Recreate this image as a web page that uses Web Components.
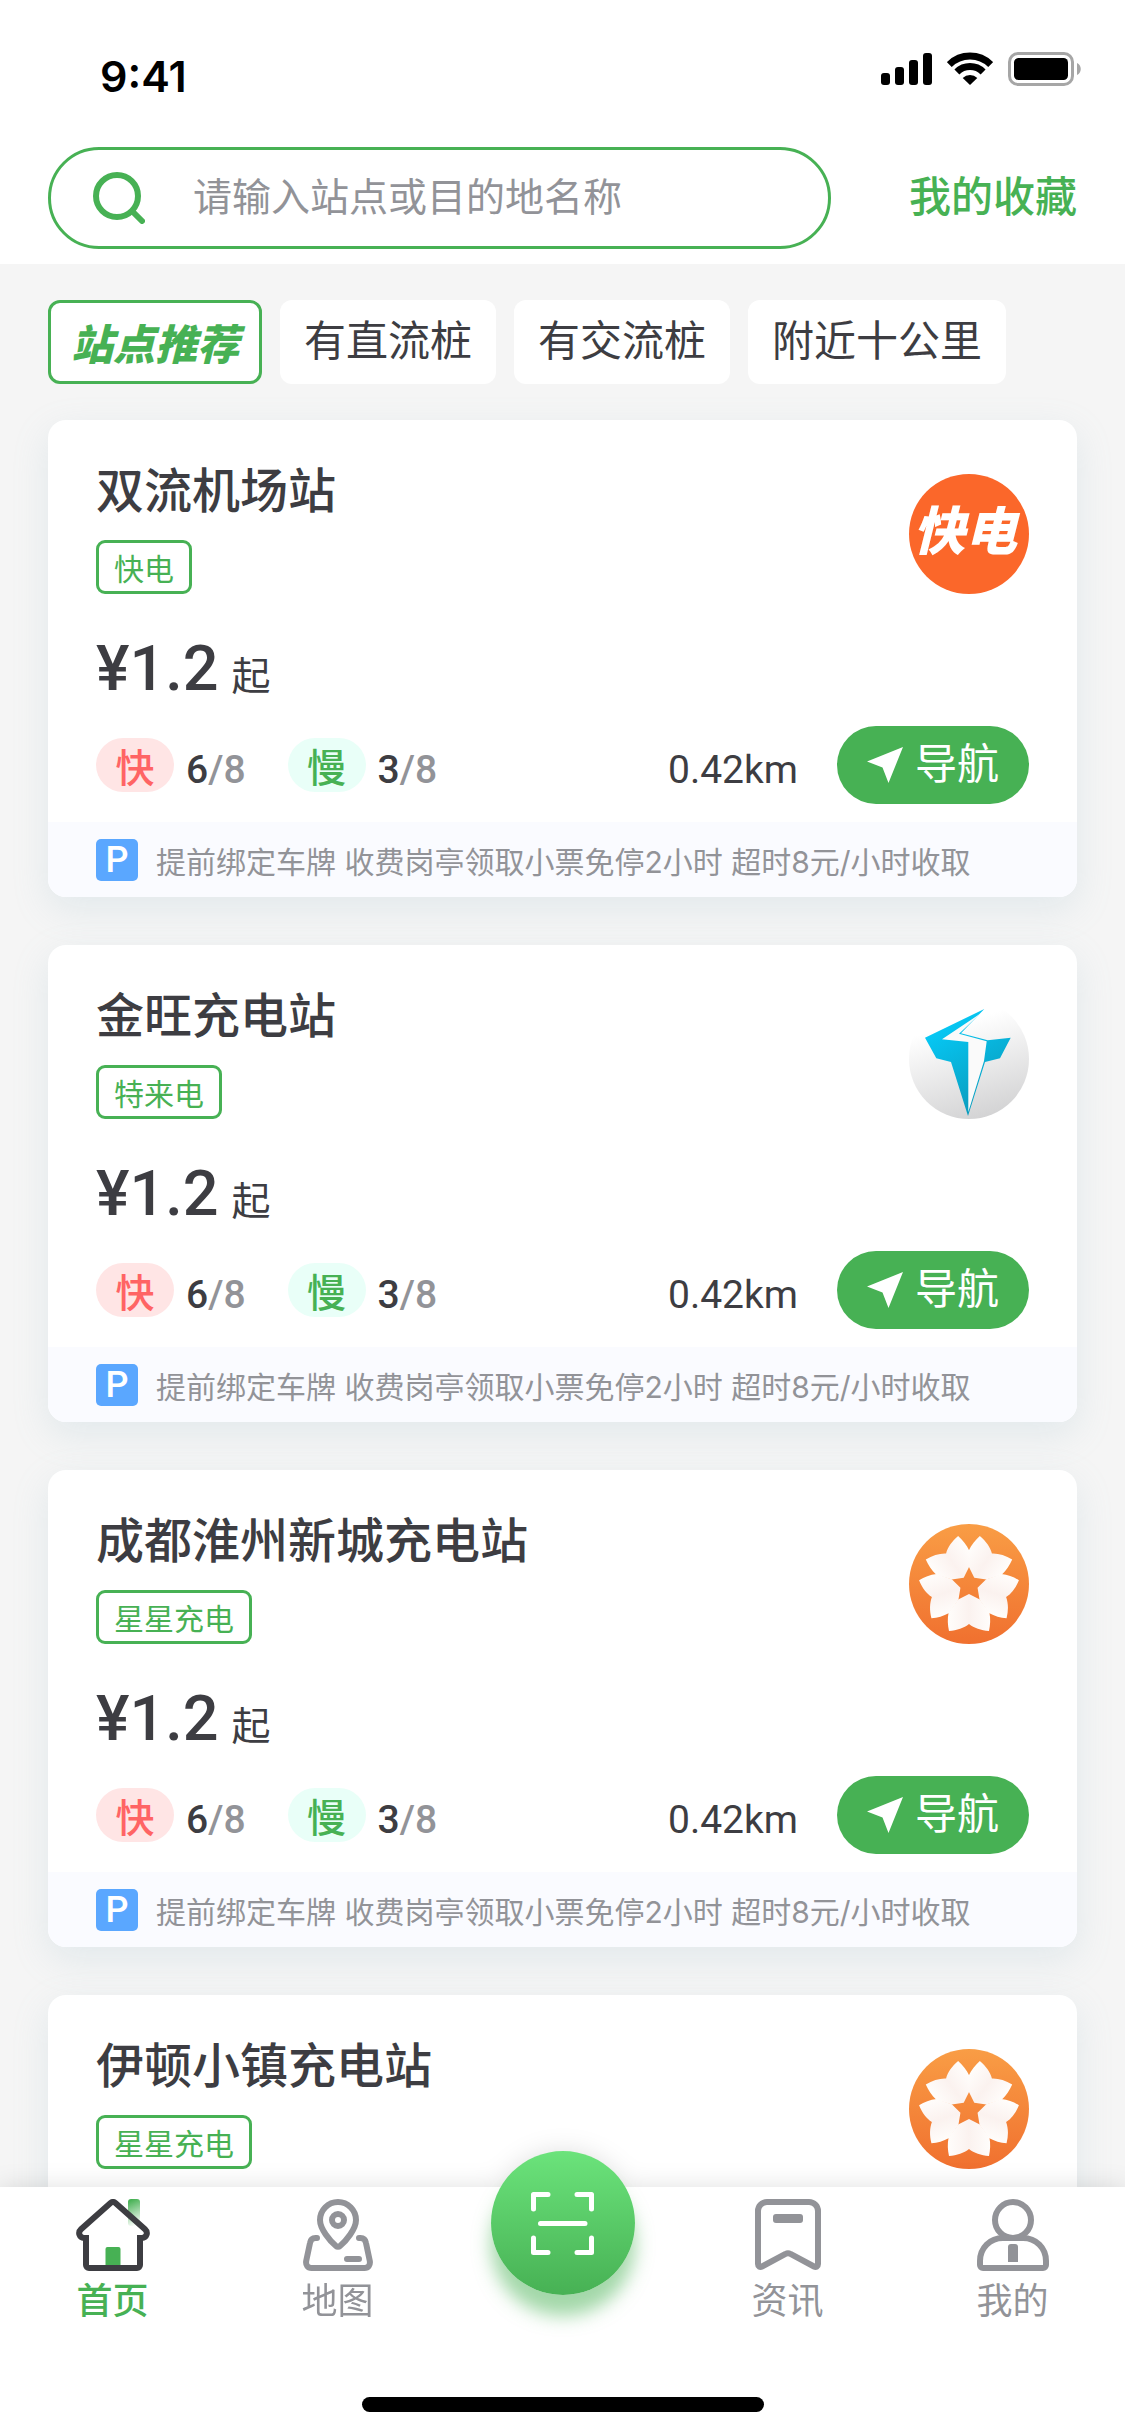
<!DOCTYPE html>
<html lang="zh-CN">
<head>
<meta charset="UTF-8">
<meta name="viewport" content="width=device-width, initial-scale=1.0">
<title>首页</title>
<style>
    html, body {
        height: 100%;
        margin: 0;
    }
    body {
        --green: #47b154;
        --dark: #3d3d42;
        --grey: #929398;
        --side: 48px;
        --cjk: "Noto Sans CJK SC", sans-serif;
        font-family: Roboto, "Noto Sans CJK SC", sans-serif;
        color: var(--dark);
    }
</style>
</head>
<body>
<app-shell>
    <status-bar slot="top">9:41</status-bar>
    <search-bar slot="top" hint="请输入站点或目的地名称">我的收藏</search-bar>

    <filter-tabs>
        <filter-tab active>站点推荐</filter-tab>
        <filter-tab>有直流桩</filter-tab>
        <filter-tab>有交流桩</filter-tab>
        <filter-tab>附近十公里</filter-tab>
    </filter-tabs>

    <station-card price="¥1.2" fast="6" slow="3" total="8" distance="0.42km">
        双流机场站
        <span slot="brand">快电</span>
        <brand-logo slot="logo" kind="kuai">快电</brand-logo>
        <span slot="note">提前绑定车牌 收费岗亭领取小票免停2小时 超时8元/小时收取</span>
    </station-card>
    <station-card price="¥1.2" fast="6" slow="3" total="8" distance="0.42km">
        金旺充电站
        <span slot="brand">特来电</span>
        <brand-logo slot="logo" kind="bolt"></brand-logo>
        <span slot="note">提前绑定车牌 收费岗亭领取小票免停2小时 超时8元/小时收取</span>
    </station-card>
    <station-card price="¥1.2" fast="6" slow="3" total="8" distance="0.42km">
        成都淮州新城充电站
        <span slot="brand">星星充电</span>
        <brand-logo slot="logo" kind="star"></brand-logo>
        <span slot="note">提前绑定车牌 收费岗亭领取小票免停2小时 超时8元/小时收取</span>
    </station-card>
    <station-card>
        伊顿小镇充电站
        <span slot="brand">星星充电</span>
        <brand-logo slot="logo" kind="star"></brand-logo>
    </station-card>

    <tab-bar slot="bottom">
        <tab-item icon="home" active>首页</tab-item>
        <tab-item icon="map">地图</tab-item>
        <scan-button></scan-button>
        <tab-item icon="news">资讯</tab-item>
        <tab-item icon="user">我的</tab-item>
    </tab-bar>
</app-shell>

<script>
// shared base: every element renders its template once into an open root
class BaseElement extends HTMLElement {
    constructor() {
        super();
        this.attachShadow({mode: 'open'});
    }
    connectedCallback() {
        const template = document.createElement('template');
        template.innerHTML = `${this.getTemplate()}<style>${this.getStyles()}</style>`;
        this.shadowRoot.replaceChildren(template.content.cloneNode(true));
    }
}

class AppShell extends BaseElement {
    getTemplate() {
        return `
            <header><slot name="top"></slot></header>
            <main><slot></slot></main>
            <slot name="bottom"></slot>`;
    }
    getStyles() {
        return `
            :host {
                display: flex;
                flex-direction: column;
                height: 100vh;
                background: #f5f5f5;
            }
            header {
                flex: none;
                background: white;
            }
            main {
                flex: 1;
                min-height: 0;
                overflow: hidden;
                display: flex;
                flex-direction: column;
                padding: 0 var(--side);
            }`;
    }
}
customElements.define('app-shell', AppShell);

class StatusBar extends BaseElement {
    getTemplate() {
        return `
            <time><slot></slot></time>
            <div class="icons">
                <svg width="51" height="34" viewBox="0 0 51 34">
                    <rect x="0" y="21" width="9" height="12" rx="3"/>
                    <rect x="14" y="15" width="9" height="18" rx="3"/>
                    <rect x="28" y="8" width="9" height="25" rx="3"/>
                    <rect x="42" y="1" width="9" height="32" rx="3"/>
                </svg>
                <svg width="46" height="34" viewBox="0 0 46 34">
                    <g fill="none" stroke="black" stroke-width="7">
                        <path d="M2.3 12.6A29.4 29.4 0 0 1 43.7 12.6"/>
                        <path d="M9.9 20A18.6 18.6 0 0 1 36.1 20"/>
                    </g>
                    <path d="M23 33L15.7 26A10.3 10.3 0 0 1 30.3 26Z"/>
                </svg>
                <svg width="73" height="34" viewBox="0 0 73 34">
                    <rect x="1.5" y="1.5" width="63" height="31" rx="8.5" fill="none" stroke="#a6a6a6" stroke-width="3"/>
                    <rect x="6" y="6" width="54" height="22" rx="4.5"/>
                    <path d="M69 11c5 2 5 10 0 12z" fill="#a6a6a6"/>
                </svg>
            </div>`;
    }
    getStyles() {
        return `
            :host {
                display: flex;
                justify-content: space-between;
                align-items: flex-start;
                padding: 52px 44px 47px 100px;
                color: black;
            }
            time {
                font: 600 43px/48px Inter, sans-serif;
            }
            .icons {
                display: flex;
                gap: 15px;
            }
            svg {
                display: block;
            }`;
    }
}
customElements.define('status-bar', StatusBar);

class SearchBar extends BaseElement {
    getTemplate() {
        const hint = this.getAttribute('hint');
        return `
            <label>
                <svg width="52" height="52" viewBox="0 0 52 52" fill="none" stroke="currentColor" stroke-width="6" stroke-linecap="round">
                    <circle cx="24" cy="24" r="21"/>
                    <path d="M39.5 39.5L49 49"/>
                </svg>
                <input type="search" placeholder="${hint}" aria-label="${hint}">
            </label>
            <a href="#favorites"><slot></slot></a>`;
    }
    getStyles() {
        return `
            :host {
                display: flex;
                align-items: center;
                gap: 78px;
                padding: 0 var(--side) 15px;
            }
            label {
                flex: 1;
                min-width: 0;
                box-sizing: border-box;
                height: 102px;
                display: flex;
                align-items: center;
                gap: 48px;
                padding: 0 42px;
                border: 3px solid var(--green);
                border-radius: 51px;
                color: var(--green);
            }
            svg {
                flex: none;
            }
            input {
                flex: 1;
                min-width: 0;
                height: 60px;
                padding: 0;
                border: none;
                outline: none;
                background: none;
                font: 39px/60px Roboto, var(--cjk);
                color: var(--dark);
            }
            input::placeholder {
                color: var(--grey);
                opacity: 1;
            }
            a {
                font-size: 42px;
                font-weight: 500;
                line-height: 60px;
                color: var(--green);
                text-decoration: none;
            }`;
    }
}
customElements.define('search-bar', SearchBar);

class FilterTabs extends BaseElement {
    getTemplate() {
        return `<slot></slot>`;
    }
    getStyles() {
        return `
            :host {
                flex: none;
                display: flex;
                gap: 18px;
                padding: 36px 0;
            }`;
    }
}
customElements.define('filter-tabs', FilterTabs);

class FilterTab extends BaseElement {
    getTemplate() {
        return `<button type="button"><slot></slot></button>`;
    }
    getStyles() {
        return `
            :host {
                display: block;
            }
            button {
                display: block;
                height: 84px;
                padding: 0 24px;
                border: none;
                border-radius: 12px;
                background: white;
                font: 42px/84px Roboto, var(--cjk);
                color: var(--dark);
                white-space: nowrap;
            }
            :host([active]) button {
                padding: 0 20px;
                border: 3px solid var(--green);
                font: italic 900 42px/76px var(--cjk);
                color: var(--green);
            }`;
    }
}
customElements.define('filter-tab', FilterTab);

class BrandLogo extends BaseElement {
    getTemplate() {
        const kind = this.getAttribute('kind');
        if (kind === 'kuai') {
            return `<slot></slot>`;
        }
        if (kind === 'bolt') {
            return `
                <svg viewBox="0 0 120 120">
                    <defs>
                        <linearGradient id="disc" x1=".35" y1="0" x2=".65" y2="1">
                            <stop offset=".2" stop-color="#fff"/>
                            <stop offset="1" stop-color="#d2d2d3"/>
                        </linearGradient>
                        <linearGradient id="cyan" x1="0" y1="0" x2=".5" y2="1">
                            <stop offset=".2" stop-color="#06c8f5"/>
                            <stop offset="1" stop-color="#0a9cbd"/>
                        </linearGradient>
                    </defs>
                    <circle cx="60" cy="60" r="60" fill="url(#disc)"/>
                    <path d="M75.3 10L16 38.7L27.3 59.3L42 63L59 117L76 63L91 59.3L101.7 38.7L78.7 41.3L52 34.3Z" fill="url(#cyan)"/>
                    <path d="M71.5 14.5L33 40.3L59.3 43V113L75 62L77.7 42.3L50 34.7Z" fill="#fafafa"/>
                </svg>`;
        }
        const petals = [0, 72, 144, 216, 288].map(a =>
            `<path transform="rotate(${a} 60 61)" d="M60 70L70.8 75.6L80.4 88.5C81.7 95 81.3 101 80 107C72 106.5 65 104 60 100C55 104 48 106.5 40 107C38.7 101 38.3 95 39.6 88.5L49.2 75.6Z"/>`
        ).join('');
        return `
            <svg viewBox="0 0 120 120">
                <defs>
                    <linearGradient id="disc" x1="0" y1="0" x2="0" y2="1">
                        <stop offset="0" stop-color="#f99d45"/>
                        <stop offset="1" stop-color="#f0702f"/>
                    </linearGradient>
                    <linearGradient id="petal">
                        <stop offset="0" stop-color="#fffdfb"/>
                        <stop offset=".5" stop-color="#fbf2ef"/>
                        <stop offset="1" stop-color="#fffdfb"/>
                    </linearGradient>
                </defs>
                <circle cx="60" cy="60" r="60" fill="url(#disc)"/>
                <g fill="url(#petal)">${petals}</g>
            </svg>`;
    }
    getStyles() {
        return `
            :host {
                display: block;
                box-sizing: border-box;
                width: 120px;
                height: 120px;
                border-radius: 50%;
            }
            :host([kind="kuai"]) {
                padding: 0 12px 0 4px;
                background: #fb672a;
                color: white;
                font-size: 52px;
                font-weight: 900;
                font-style: italic;
                line-height: 118px;
                white-space: nowrap;
            }
            svg {
                display: block;
                width: 100%;
                height: 100%;
            }`;
    }
}
customElements.define('brand-logo', BrandLogo);

class StationCard extends BaseElement {
    getTemplate() {
        return `
            <div class="body">
                <div class="head">
                    <div>
                        <h2><slot></slot></h2>
                        <div class="brand"><slot name="brand"></slot></div>
                    </div>
                    <slot name="logo"></slot>
                </div>
                ${this.hasAttribute('price') ? this.getDetails() : ''}
            </div>
            ${this.hasAttribute('price') ? this.getFoot() : ''}`;
    }
    getDetails() {
        const total = this.getAttribute('total');
        return `
            <p class="price"><b>${this.getAttribute('price')}</b><span>起</span></p>
            <div class="row">
                <span class="pill fast">快</span>
                <span class="count"><b>${this.getAttribute('fast')}</b>/${total}</span>
                <span class="pill slow">慢</span>
                <span class="count"><b>${this.getAttribute('slow')}</b>/${total}</span>
                <span class="distance">${this.getAttribute('distance')}</span>
                <button type="button">
                    <svg width="36" height="36" viewBox="0 0 36 36" fill="currentColor"><path d="M36 0L21.5 36L15.5 20.5L0 14.5Z"/></svg>
                    导航
                </button>
            </div>`;
    }
    getFoot() {
        return `
            <div class="foot">
                <span class="parking">P</span>
                <span class="note"><slot name="note"></slot></span>
            </div>`;
    }
    getStyles() {
        return `
            :host {
                flex: none;
                display: block;
                margin-bottom: 48px;
                border-radius: 18px;
                background: white;
                box-shadow: 0 12px 36px rgba(140, 180, 195, .18);
            }
            .body {
                min-height: 342px;
                padding: 42px 48px 18px;
            }
            .head {
                display: flex;
                justify-content: space-between;
                align-items: flex-end;
            }
            h2 {
                margin: 0 0 18px;
                font-size: 48px;
                font-weight: 500;
                line-height: 60px;
            }
            .brand {
                box-sizing: border-box;
                width: fit-content;
                height: 54px;
                padding: 0 15px;
                border: 3px solid var(--green);
                border-radius: 9px;
                font: 30px/48px var(--cjk);
                color: var(--green);
            }
            .price {
                display: flex;
                align-items: baseline;
                gap: 13px;
                margin: 39px 0 21px;
                font-size: 39px;
                line-height: 48px;
            }
            .price b {
                font-size: 63px;
                font-weight: 500;
                line-height: 72px;
            }
            .row {
                display: flex;
                align-items: center;
                height: 78px;
                font-size: 39px;
                line-height: 54px;
            }
            .pill {
                width: 78px;
                border-radius: 27px;
                font-family: var(--cjk);
                font-weight: 500;
                text-align: center;
            }
            .fast {
                background: #ffe5e5;
                color: #ff6464;
            }
            .slow {
                background: #e9fff8;
                color: var(--green);
            }
            .count {
                padding: 9px 42px 0 12px;
                font-weight: 500;
                color: var(--grey);
            }
            .count b {
                font-weight: 500;
                color: var(--dark);
            }
            .distance {
                margin-left: auto;
                padding: 9px 39px 0 0;
            }
            button {
                display: flex;
                align-items: center;
                justify-content: center;
                gap: 12px;
                width: 192px;
                height: 78px;
                padding: 0;
                border: none;
                border-radius: 39px;
                background: var(--green);
                color: white;
                font: 42px/78px Roboto, var(--cjk);
            }
            .foot {
                display: flex;
                align-items: center;
                gap: 18px;
                height: 75px;
                padding: 0 48px;
                border-radius: 0 0 18px 18px;
                background: #fafbff;
                color: var(--grey);
            }
            .note {
                padding-top: 4px;
                font: 30px/42px Inter, var(--cjk);
            }
            .parking {
                flex: none;
                width: 42px;
                border-radius: 5px;
                background: #5aa7ff;
                color: white;
                font: 500 36px/42px Roboto, sans-serif;
                text-align: center;
            }`;
    }
}
customElements.define('station-card', StationCard);

class TabBar extends BaseElement {
    getTemplate() {
        return `
            <nav><slot></slot></nav>
            <div class="indicator"></div>`;
    }
    getStyles() {
        return `
            :host {
                flex: none;
                display: block;
                padding-bottom: 24px;
                background: white;
                filter: drop-shadow(0 0 12px rgba(0, 0, 0, .12));
            }
            nav {
                display: flex;
                align-items: flex-start;
                height: 210px;
            }
            .indicator {
                width: 402px;
                height: 15px;
                margin: 0 auto;
                border-radius: 8px;
                background: black;
            }`;
    }
}
customElements.define('tab-bar', TabBar);

const tabIcons = {
    home: `
        <svg width="74" height="72" viewBox="0 0 74 72" fill="none">
            <defs>
                <linearGradient id="chimney" x1=".4" y1="0" x2=".6" y2="1">
                    <stop offset="0" stop-color="#47b154"/>
                    <stop offset="1" stop-color="#47b154" stop-opacity="0"/>
                </linearGradient>
            </defs>
            <rect x="52" width="12" height="27" rx="3" fill="url(#chimney)"/>
            <path d="M29.5 66V50a2 2 0 0 1 2-2h11a2 2 0 0 1 2 2v16z" fill="#47b154"/>
            <g stroke="#3d3d42" stroke-width="6">
                <path d="M10 36V66a3 3 0 0 0 3 3H61a3 3 0 0 0 3-3V36"/>
                <path d="M13 39H8C3.5 39 1.5 33.5 5 30.3L34.5 4a4 4 0 0 1 5 0L69 30.3C72.5 33.5 70.5 39 66 39H61"/>
            </g>
        </svg>`,
    map: `
        <svg width="70" height="72" viewBox="0 0 70 72" fill="none" stroke="currentColor" stroke-width="6" stroke-linecap="round">
            <path d="M33 47C27 42 17 30 17 21A18 18 0 0 1 53 21C53 30 43 42 37 47a3 3 0 0 1-4 0z"/>
            <circle cx="35" cy="21" r="6"/>
            <path d="M14 39h-1.5c-3 0-5 2-5.5 5L3.2 62c-.6 4 1.4 7 5.3 7H61.5c3.9 0 5.9-3 5.3-7L63 44c-.5-3-2.5-5-5.5-5H56M44 60H56"/>
        </svg>`,
    news: `
        <svg width="66" height="72" viewBox="0 0 66 72" fill="none" stroke="currentColor" stroke-width="6">
            <path d="M3 65V12a9 9 0 0 1 9-9H54a9 9 0 0 1 9 9V65c0 2.5-2 3.5-4 2.5L35.5 55a5 5 0 0 0-5 0L7 67.5c-2 1-4 0-4-2.5z"/>
            <rect x="18" y="15" width="30" height="9" rx="3" fill="currentColor" stroke="none"/>
        </svg>`,
    user: `
        <svg width="72" height="72" viewBox="0 0 72 72" fill="none" stroke="currentColor" stroke-width="6">
            <circle cx="36" cy="21" r="18"/>
            <path d="M3 66V62C3 49 13 39 26 39H46C59 39 69 49 69 62V66a3 3 0 0 1-3 3H6a3 3 0 0 1-3-3z"/>
            <path d="M31 63V48a3 3 0 0 1 3-3h4a3 3 0 0 1 3 3V63z" fill="currentColor" stroke="none"/>
        </svg>`
};

class TabItem extends BaseElement {
    getTemplate() {
        const icon = this.getAttribute('icon');
        return `<a href="#${icon}">${tabIcons[icon]}<slot></slot></a>`;
    }
    getStyles() {
        return `
            :host {
                flex: 1;
                display: block;
            }
            a {
                display: flex;
                flex-direction: column;
                align-items: center;
                gap: 3px;
                padding-top: 12px;
                font: 36px/48px var(--cjk);
                color: var(--grey);
                text-decoration: none;
            }
            :host([active]) a {
                font-weight: 500;
                color: var(--green);
            }`;
    }
}
customElements.define('tab-item', TabItem);

class ScanButton extends BaseElement {
    getTemplate() {
        return `
            <button type="button" aria-label="扫码">
                <svg width="63" height="63" viewBox="0 0 63 63" fill="none" stroke="white" stroke-width="5" stroke-linecap="round" stroke-linejoin="round">
                    <path d="M2.5 17V2.5H17M46 2.5H60.5V17M60.5 46V60.5H46M17 60.5H2.5V46M9.5 31.5H54"/>
                </svg>
            </button>`;
    }
    getStyles() {
        return `
            :host {
                flex: 1;
                display: flex;
                justify-content: center;
                margin-top: -36px;
            }
            button {
                display: flex;
                align-items: center;
                justify-content: center;
                width: 144px;
                height: 144px;
                padding: 0;
                border: none;
                border-radius: 50%;
                background: linear-gradient(#6be37b, #47b154);
                box-shadow: 0 21px 18px rgba(71, 177, 84, .5);
            }`;
    }
}
customElements.define('scan-button', ScanButton);
</script>
</body>
</html>
